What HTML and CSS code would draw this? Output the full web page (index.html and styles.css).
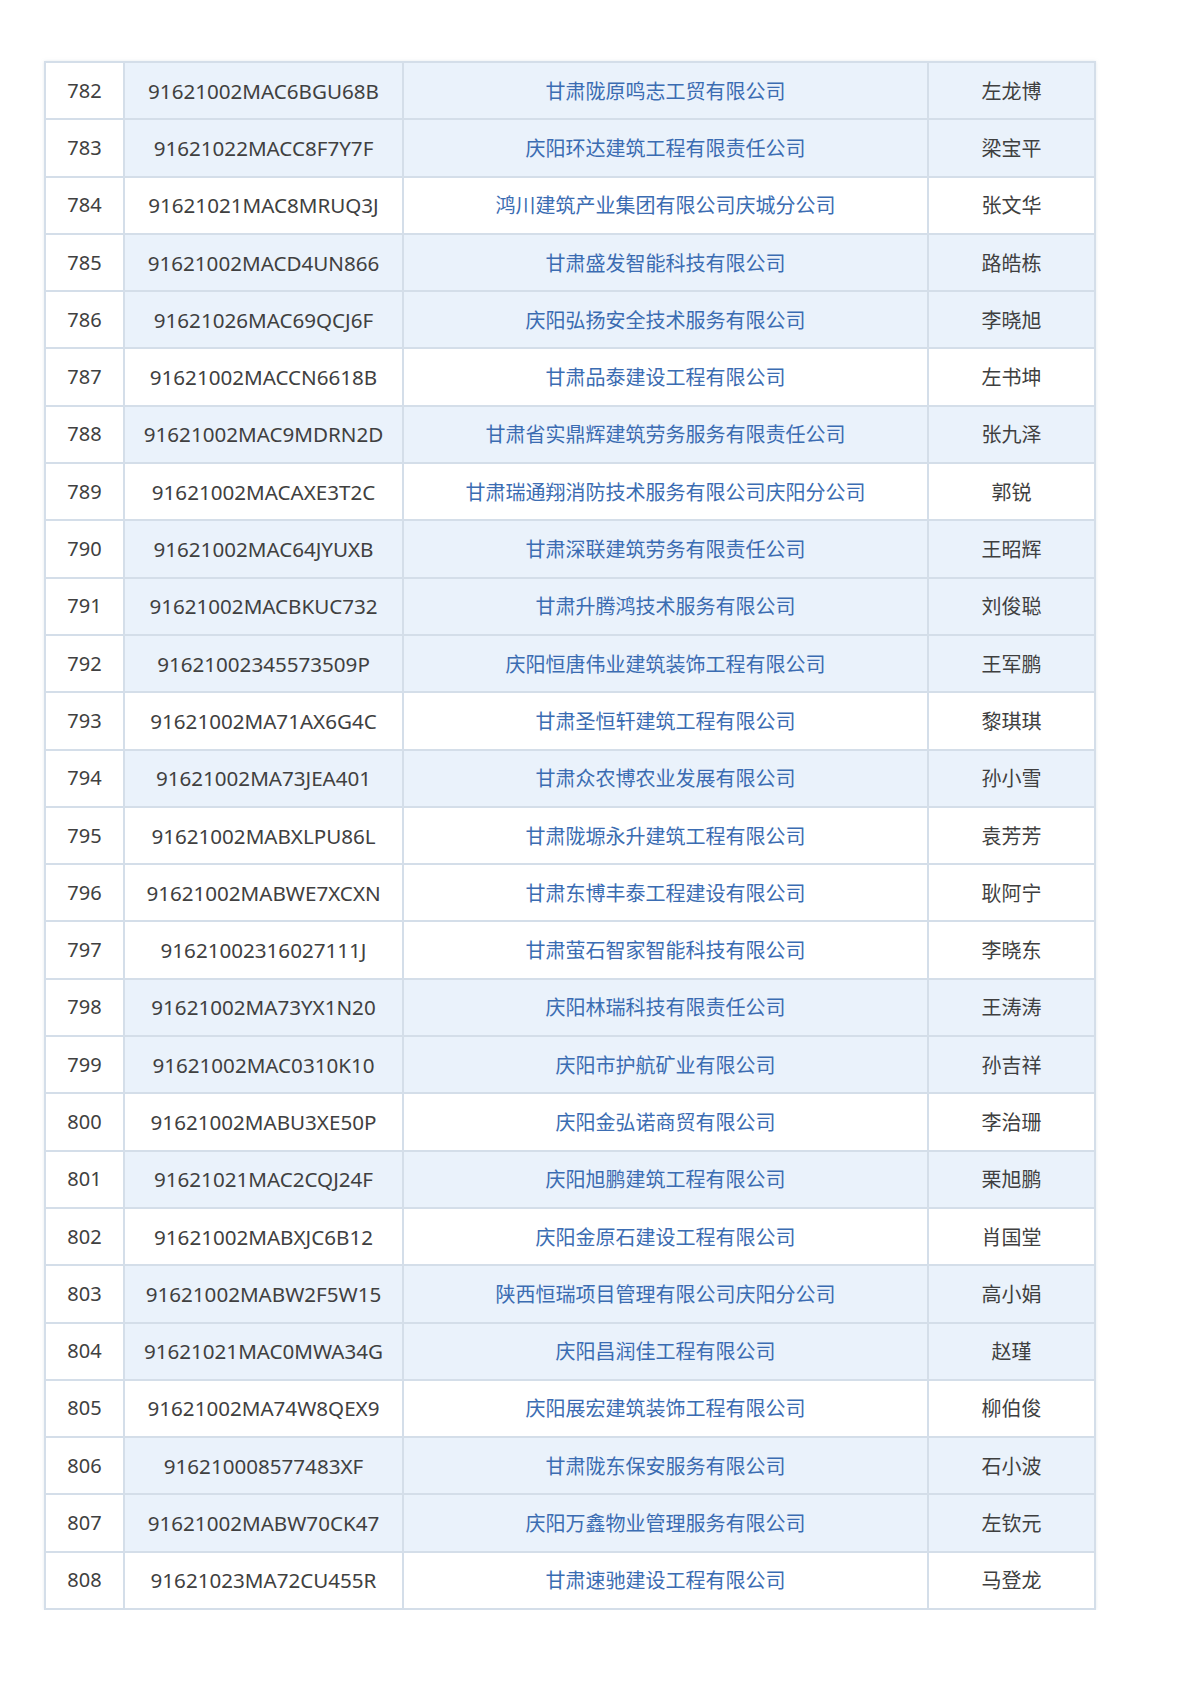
FILE: index.html
```html
<!DOCTYPE html>
<html lang="zh-CN">
<head>
<meta charset="utf-8">
<link rel="stylesheet" href="styles.css">
</head>
<body>
<div class="page">
<table class="list">
<colgroup><col class="c-no"><col class="c-code"><col class="c-name"><col class="c-person"></colgroup>
<tbody>
<tr class="b"><td class="no">782</td><td class="code">91621002MAC6BGU68B</td><td class="co">甘肃陇原鸣志工贸有限公司</td><td class="per">左龙博</td></tr>
<tr class="b"><td class="no">783</td><td class="code">91621022MACC8F7Y7F</td><td class="co">庆阳环达建筑工程有限责任公司</td><td class="per">梁宝平</td></tr>
<tr><td class="no">784</td><td class="code">91621021MAC8MRUQ3J</td><td class="co">鸿川建筑产业集团有限公司庆城分公司</td><td class="per">张文华</td></tr>
<tr class="b"><td class="no">785</td><td class="code">91621002MACD4UN866</td><td class="co">甘肃盛发智能科技有限公司</td><td class="per">路皓栋</td></tr>
<tr class="b"><td class="no">786</td><td class="code">91621026MAC69QCJ6F</td><td class="co">庆阳弘扬安全技术服务有限公司</td><td class="per">李晓旭</td></tr>
<tr><td class="no">787</td><td class="code">91621002MACCN6618B</td><td class="co">甘肃品泰建设工程有限公司</td><td class="per">左书坤</td></tr>
<tr class="b"><td class="no">788</td><td class="code">91621002MAC9MDRN2D</td><td class="co">甘肃省实鼎辉建筑劳务服务有限责任公司</td><td class="per">张九泽</td></tr>
<tr><td class="no">789</td><td class="code">91621002MACAXE3T2C</td><td class="co">甘肃瑞通翔消防技术服务有限公司庆阳分公司</td><td class="per">郭锐</td></tr>
<tr class="b"><td class="no">790</td><td class="code">91621002MAC64JYUXB</td><td class="co">甘肃深联建筑劳务有限责任公司</td><td class="per">王昭辉</td></tr>
<tr class="b"><td class="no">791</td><td class="code">91621002MACBKUC732</td><td class="co">甘肃升腾鸿技术服务有限公司</td><td class="per">刘俊聪</td></tr>
<tr class="b"><td class="no">792</td><td class="code">91621002345573509P</td><td class="co">庆阳恒唐伟业建筑装饰工程有限公司</td><td class="per">王军鹏</td></tr>
<tr><td class="no">793</td><td class="code">91621002MA71AX6G4C</td><td class="co">甘肃圣恒轩建筑工程有限公司</td><td class="per">黎琪琪</td></tr>
<tr class="b"><td class="no">794</td><td class="code">91621002MA73JEA401</td><td class="co">甘肃众农博农业发展有限公司</td><td class="per">孙小雪</td></tr>
<tr><td class="no">795</td><td class="code">91621002MABXLPU86L</td><td class="co">甘肃陇塬永升建筑工程有限公司</td><td class="per">袁芳芳</td></tr>
<tr><td class="no">796</td><td class="code">91621002MABWE7XCXN</td><td class="co">甘肃东博丰泰工程建设有限公司</td><td class="per">耿阿宁</td></tr>
<tr><td class="no">797</td><td class="code">91621002316027111J</td><td class="co">甘肃萤石智家智能科技有限公司</td><td class="per">李晓东</td></tr>
<tr class="b"><td class="no">798</td><td class="code">91621002MA73YX1N20</td><td class="co">庆阳林瑞科技有限责任公司</td><td class="per">王涛涛</td></tr>
<tr class="b"><td class="no">799</td><td class="code">91621002MAC0310K10</td><td class="co">庆阳市护航矿业有限公司</td><td class="per">孙吉祥</td></tr>
<tr><td class="no">800</td><td class="code">91621002MABU3XE50P</td><td class="co">庆阳金弘诺商贸有限公司</td><td class="per">李治珊</td></tr>
<tr class="b"><td class="no">801</td><td class="code">91621021MAC2CQJ24F</td><td class="co">庆阳旭鹏建筑工程有限公司</td><td class="per">栗旭鹏</td></tr>
<tr><td class="no">802</td><td class="code">91621002MABXJC6B12</td><td class="co">庆阳金原石建设工程有限公司</td><td class="per">肖国堂</td></tr>
<tr class="b"><td class="no">803</td><td class="code">91621002MABW2F5W15</td><td class="co">陕西恒瑞项目管理有限公司庆阳分公司</td><td class="per">高小娟</td></tr>
<tr class="b"><td class="no">804</td><td class="code">91621021MAC0MWA34G</td><td class="co">庆阳昌润佳工程有限公司</td><td class="per">赵瑾</td></tr>
<tr><td class="no">805</td><td class="code">91621002MA74W8QEX9</td><td class="co">庆阳展宏建筑装饰工程有限公司</td><td class="per">柳伯俊</td></tr>
<tr class="b"><td class="no">806</td><td class="code">916210008577483XF</td><td class="co">甘肃陇东保安服务有限公司</td><td class="per">石小波</td></tr>
<tr class="b"><td class="no">807</td><td class="code">91621002MABW70CK47</td><td class="co">庆阳万鑫物业管理服务有限公司</td><td class="per">左钦元</td></tr>
<tr><td class="no">808</td><td class="code">91621023MA72CU455R</td><td class="co">甘肃速驰建设工程有限公司</td><td class="per">马登龙</td></tr>
</tbody>
</table>
</div>
</body>
</html>
```
FILE: styles.css
```css
html, body {
  margin: 0;
  padding: 0;
  background: #ffffff;
}
.page {
  padding: 61px 0 0 44px;
}
.list {
  border-collapse: collapse;
  table-layout: fixed;
  width: 1052px;
  font-family: "Noto Sans", "Noto Sans CJK SC", sans-serif;
  font-size: 20px;
  color: #404040;
  box-shadow: 0 0 3px rgba(180, 195, 210, 0.35);
}
.c-no { width: 79px; }
.c-code { width: 279px; }
.c-name { width: 525px; }
.c-person { width: 167px; }
.list td {
  border: 2px solid #d4dee9;
  height: 55.3px;
  padding: 0;
  text-align: center;
  vertical-align: middle;
  line-height: 24px;
  white-space: nowrap;
}
.list td.code {
  font-size: 20.6px;
}
.list td.co {
  color: #3b6cb2;
  font-family: "Noto Sans CJK SC", sans-serif;
}
.list td.per {
  font-family: "Noto Sans CJK SC", sans-serif;
  color: #3f3f3f;
}
.list tr.b td {
  background: #eaf2fb;
}
.list tr.b td.no {
  background: #ffffff;
}
```
